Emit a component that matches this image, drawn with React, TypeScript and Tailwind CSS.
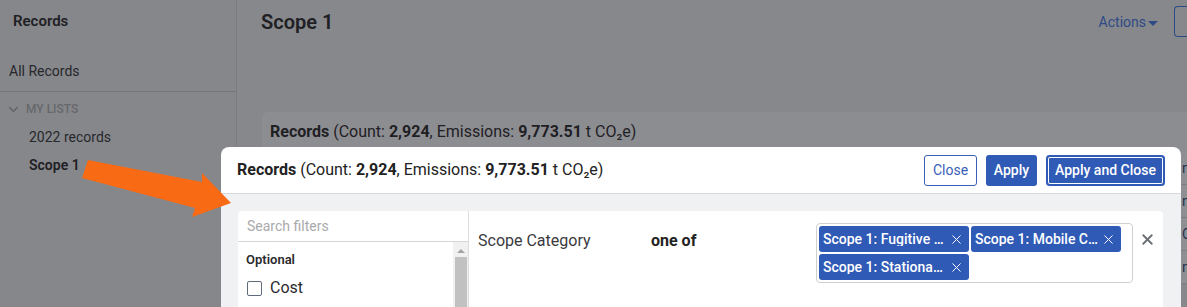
import { X, ChevronDown } from "lucide-react";

const tags = ["Scope 1: Fugitive Emissions", "Scope 1: Mobile Combustion", "Scope 1: Stationary Combustion"];

function Tag({ label }: { label: string }) {
  return (
    <div className="flex h-[26px] w-[150px] items-center justify-between rounded-[3px] bg-[#2f5ab6] pl-[4px] pr-[5px] text-white">
      <span className="w-[124px] overflow-hidden whitespace-nowrap text-ellipsis text-[14px] font-medium leading-none">{label}</span>
      <X size={15} strokeWidth={1.6} />
    </div>
  );
}

export default function App() {
  return (
    <div className="relative h-[307px] w-[1187px] overflow-hidden bg-[#87888c] font-['Roboto',sans-serif] text-[#1f2024]">
      <div className="flex h-full">
        {/* sidebar */}
        <aside className="w-[237px] shrink-0 border-r border-[#7b7c80] bg-[#86878b]">
          <div className="px-[13px] pt-[12px] text-[15px] font-semibold leading-[18px]">Records</div>
          <div className="px-[9px] pt-[32px] pb-[11px] text-[14px] leading-[18px] text-[#26272b]">All Records</div>
          <div className="border-t border-[#75767a] pt-[9px]">
            <div className="flex items-center gap-[5px] px-[6px] text-[12px] font-medium leading-[16px] text-[#66676b]">
              <ChevronDown size={15} strokeWidth={2.5} />
              <span>MY LISTS</span>
            </div>
            <div className="pl-[29px] pt-[11px] text-[14px] leading-[18px] text-[#26272b]">2022 records</div>
            <div className="pl-[29px] pt-[10px] text-[14px] font-semibold leading-[18px]">Scope 1</div>
          </div>
        </aside>

        {/* main */}
        <main className="min-w-0 flex-1 overflow-hidden">
          <div className="flex items-start justify-between pl-[24px] pt-[9px]">
            <h1 className="text-[20px] font-semibold leading-[26px]">Scope 1</h1>
            <div className="flex items-center gap-[16px]">
              <button className="-mt-[2px] flex items-center gap-[2px] text-[14px] text-[#2e4a86]">
                Actions
                <span className="mt-[2px] h-0 w-0 border-x-[5px] border-t-[5px] border-x-transparent border-t-[#2e4a86]" />
              </button>
              <div className="-mt-[3px] h-[31px] w-[13px] rounded-l-[4px] border border-r-0 border-[#2e4a86]" />
            </div>
          </div>

          <div className="ml-[25px] mt-[75px] rounded-tl-[6px] bg-[#8c8d91] px-[8px] pb-[10px] pt-[10px] text-[16px] leading-[20px]">
            <b className="font-bold">Records</b> (Count: <b className="font-bold">2,924</b>, Emissions:{" "}
            <b className="font-bold">9,773.51</b> t CO₂e)
          </div>
          <div className="ml-[25px] bg-[#8e8f93]">
            {["n", "n", "C", "n"].map((c, i) => (
              <div key={i} className="flex h-[33px] items-center border-b border-[#7d7e82] text-[14px] text-[#22304f]">
                <span className="w-[920px] shrink-0" />
                <span className="whitespace-nowrap">{c}ame</span>
              </div>
            ))}
          </div>
        </main>
      </div>

      {/* modal */}
      <div className="absolute left-[221px] top-[147px] h-[180px] w-[960px] overflow-hidden rounded-[8px] bg-white">
        <div className="flex h-[47px] items-center justify-between border-b border-[#d8d9dc] pl-[16px] pr-[16px]">
          <div className="text-[16px] text-[#222]">
            <b className="font-bold">Records</b> (Count: <b className="font-bold">2,924</b>, Emissions:{" "}
            <b className="font-bold">9,773.51</b> t CO₂e)
          </div>
          <div className="flex items-center gap-[9px]">
            <button className="h-[31px] w-[53px] rounded-[3px] border border-[#3a5fb9] text-[14px] text-[#3a5fb9]">Close</button>
            <button className="h-[31px] w-[51px] rounded-[3px] bg-[#2f5ab6] text-[14px] font-medium text-white">Apply</button>
            <button className="h-[31px] w-[119px] rounded-[4px] bg-[#2f5ab6] text-[14px] font-medium text-white shadow-[inset_0_0_0_2px_#2f5ab6,inset_0_0_0_3px_white]">
              Apply and Close
            </button>
          </div>
        </div>

        <div className="h-full bg-[#f0f1f3] pl-[17px] pr-[18px] pt-[17px]">
          <div className="flex h-[120px] rounded-[4px] bg-white">
            <div className="w-[231px] shrink-0 border-r border-[#dcdcdc]">
              <div className="flex h-[31px] items-center border-b border-[#d6d6d6] px-[9px] text-[14px] text-[#a9a9ab]">
                Search filters
              </div>
              <div className="flex">
                <div className="flex-1">
                  <div className="px-[8px] pt-[10px] text-[13px] font-semibold leading-[16px] text-[#2a2a2e]">Optional</div>
                  <label className="flex items-center gap-[8px] px-[9px] pt-[11px] text-[16px] leading-[18px] text-[#2a2a2e]">
                    <span className="h-[15px] w-[15px] rounded-[2px] border border-[#5f6b7a]" />
                    Cost
                  </label>
                </div>
                <div className="w-[15px] bg-[#f1f1f1] pt-[7px]">
                  <div className="mx-auto h-0 w-0 border-x-[4px] border-b-[4px] border-x-transparent border-b-[#a3a3a3]" />
                  <div className="mx-auto mt-[4px] h-[60px] w-[12px] bg-[#c1c1c1]" />
                </div>
              </div>
            </div>

            <div className="flex flex-1 items-start pl-[9px] pt-[12px]">
              <div className="w-[173px] pt-[6px] text-[16px] text-[#3a3a3e]">Scope Category</div>
              <div className="w-[165px] pt-[6px] text-[16px] font-bold text-[#222]">one of</div>
              <div className="flex h-[60px] w-[317px] flex-wrap content-start gap-[2px] rounded-[4px] border border-[#d0d0d0] p-[2px]">
                {tags.map((t) => (
                  <Tag key={t} label={t} />
                ))}
              </div>
              <div className="pl-[6px] pt-[8px] text-[#6b6f75]">
                <X size={17} strokeWidth={2.6} />
              </div>
            </div>
          </div>
        </div>
      </div>

      {/* annotation arrow */}
      <svg className="pointer-events-none absolute left-0 top-0" width="1187" height="307">
        <polygon points="88,160 202,182 202,173 231,203 192,217 195,208 82,178" fill="#f96a15" />
      </svg>
    </div>
  );
}
